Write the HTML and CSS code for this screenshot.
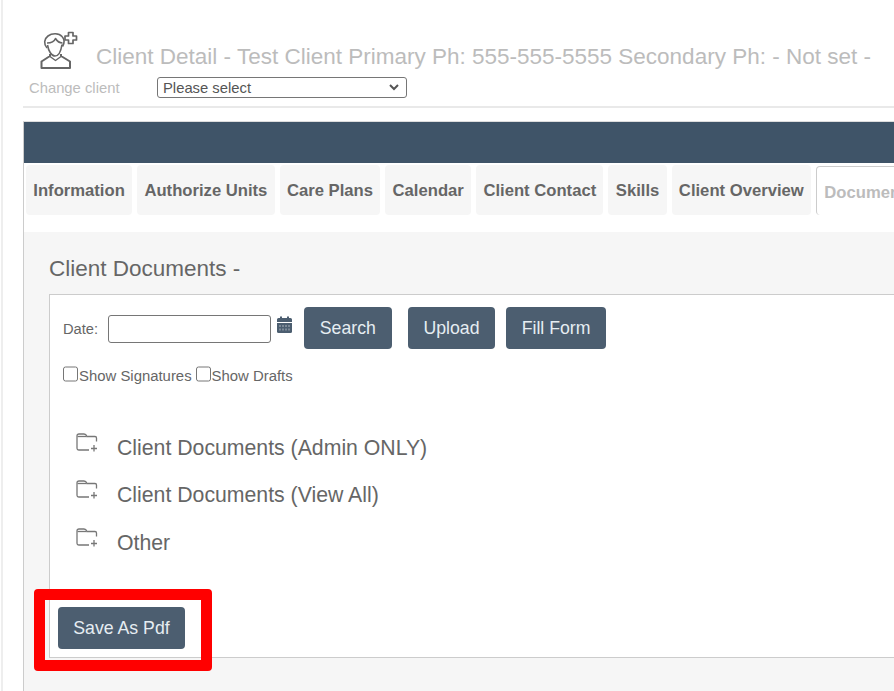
FILE: index.html
```html
<!DOCTYPE html>
<html lang="en">
<head>
<meta charset="utf-8">
<title>Client Detail</title>
<link rel="stylesheet" href="styles.css">
</head>
<body>
<div class="page">
  <header class="head">
    <div class="title-row">
      <svg class="user-icon" viewBox="0 0 38 38" width="38" height="38" fill="none" stroke="#666" stroke-width="1.600" stroke-linejoin="round">
        <path d="M7 17C3.500 13 4 8 8 5C12 2 19 2 22 5.500C24.500 8 24.500 12 22.500 15.500"/>
        <path d="M7 12C11 12 14.500 10 15.500 7.500C17 10 20 12 22.500 12"/>
        <path d="M7.500 14C8.500 20 11.500 25 15 25C18.500 25 21 20 22 13.500"/>
        <path d="M10 23v2L1.500 30.500V37H30V30.500L21 25v-2" stroke-width="2"/>
        <path d="M10 25.500l5.500 4 5.500-4" stroke-width="1.400"/>
        <path d="M28.500 1.500h4.500v3.500h3.500v4H33v3.500h-4.500V9H25V5h3.500z" stroke-width="1.700"/>
      </svg>
      <h1 class="title">Client Detail - Test Client Primary Ph: 555-555-5555 Secondary Ph: - Not set -</h1>
    </div>
    <div class="change-row">
      <label class="change-label" for="client">Change client</label>
      <select class="client-select" id="client"><option>Please select</option></select>
    </div>
  </header>
  <section class="panel">
    <div class="bar"></div>
    <nav class="tabs">
      <a class="tab">Information</a>
      <a class="tab">Authorize Units</a>
      <a class="tab">Care Plans</a>
      <a class="tab">Calendar</a>
      <a class="tab">Client Contact</a>
      <a class="tab">Skills</a>
      <a class="tab">Client Overview</a>
      <a class="tab active">Documents</a>
    </nav>
    <div class="content">
      <h2 class="section-title">Client Documents -</h2>
      <div class="box">
        <div class="toolbar">
          <label class="date-label" for="date">Date:</label>
          <input class="date-input" id="date" type="text">
          <svg class="cal-icon" viewBox="0 0 15 17" width="15" height="17">
            <path fill="#4c5e70" d="M1.500 2H3V0.500h2V2h5V0.500h2V2h1.500A1.500 1.500 0 0 1 15 3.500V6H0V3.500A1.500 1.500 0 0 1 1.500 2z"/>
            <path fill="#4c5e70" d="M0 7h15v8.500a1.500 1.500 0 0 1-1.500 1.500h-12A1.500 1.500 0 0 1 0 15.500z"/>
            <path fill="#7d8a97" d="M2 9h2v2H2zM5 9h2v2H5zM8 9h2v2H8zM11 9h2v2h-2zM2 12.500h2v2H2zM5 12.500h2v2H5zM8 12.500h2v2H8zM11 12.500h2v2h-2z"/>
          </svg>
          <button class="btn btn-search">Search</button>
          <button class="btn btn-upload">Upload</button>
          <button class="btn btn-fill">Fill Form</button>
        </div>
        <div class="checks">
          <label class="check"><input type="checkbox">Show Signatures</label>
          <label class="check"><input type="checkbox">Show Drafts</label>
        </div>
        <ul class="tree">
          <li class="tree-row">
            <svg class="folder" viewBox="0 0 22 19" width="22" height="19" fill="none" stroke="#777" stroke-width="1.300"><path d="M13 17H3Q1 17 1 15V3Q1 1 3 1H8Q10 1 11 3.500H19Q20.500 3.500 20.500 5V8.500"/><path d="M1.500 3.500h9"/><path d="M18 12v6.500M15 15.500h6"/></svg>
            <span>Client Documents (Admin ONLY)</span>
          </li>
          <li class="tree-row">
            <svg class="folder" viewBox="0 0 22 19" width="22" height="19" fill="none" stroke="#777" stroke-width="1.300"><path d="M13 17H3Q1 17 1 15V3Q1 1 3 1H8Q10 1 11 3.500H19Q20.500 3.500 20.500 5V8.500"/><path d="M1.500 3.500h9"/><path d="M18 12v6.500M15 15.500h6"/></svg>
            <span>Client Documents (View All)</span>
          </li>
          <li class="tree-row">
            <svg class="folder" viewBox="0 0 22 19" width="22" height="19" fill="none" stroke="#777" stroke-width="1.300"><path d="M13 17H3Q1 17 1 15V3Q1 1 3 1H8Q10 1 11 3.500H19Q20.500 3.500 20.500 5V8.500"/><path d="M1.500 3.500h9"/><path d="M18 12v6.500M15 15.500h6"/></svg>
            <span>Other</span>
          </li>
        </ul>
        <button class="btn btn-save">Save As Pdf</button>
      </div>
    </div>
  </section>
</div>
<div class="annotation"></div>
</body>
</html>
```
FILE: styles.css
```css
* { box-sizing: border-box; }
html, body { margin: 0; padding: 0; }
body {
  width: 894px;
  height: 691px;
  overflow: hidden;
  position: relative;
  background: #fff;
  font-family: "Liberation Sans", Arial, sans-serif;
  color: #666;
}
.page {
  height: 691px;
  margin-left: 1px;
  border-left: 2px solid #eee;
  padding-top: 31px;
  overflow: hidden;
}
.head {
  margin-left: 20px;
  height: 77px;
  border-bottom: 2px solid #e9e9e9;
}
.title-row {
  display: flex;
  align-items: flex-end;
  height: 38px;
  padding-left: 17px;
}
.user-icon { flex: none; }
.title {
  margin: 0 0 -1px 18px;
  font-size: 22.500px;
  font-weight: 400;
  line-height: 26px;
  color: #bcbcbc;
  white-space: nowrap;
}
.change-row {
  display: flex;
  align-items: center;
  margin-top: 8px;
  padding-left: 6px;
}
.change-label {
  width: 128px;
  font-size: 14.800px;
  color: #bcbcbc;
}
.client-select {
  appearance: none;
  width: 250px;
  height: 21px;
  padding: 0 0 0 5px;
  border: 1px solid #767676;
  border-radius: 3px;
  background: #fff url("data:image/svg+xml,%3Csvg xmlns='http://www.w3.org/2000/svg' width='10' height='7'%3E%3Cpath d='M1 1l4 4 4-4' fill='none' stroke='%23555' stroke-width='2'/%3E%3C/svg%3E") no-repeat right 7px center;
  font: 14.800px "Liberation Sans", Arial, sans-serif;
  color: #555;
}
.panel {
  margin: 13px 0 0 20px;
  border-left: 1px solid #ccc;
  border-top: 1px solid #ddd;
  height: 600px;
}
.bar { height: 41px; background: #3f5468; }
.tabs {
  display: flex;
  gap: 5px;
  height: 69px;
  padding: 2px 0 0 2px;
  background: #fff;
  white-space: nowrap;
}
.tab {
  flex: none;
  height: 50px;
  padding: 0 7.300px;
  border-radius: 4px;
  background: #f6f6f6;
  font-size: 16.650px;
  font-weight: 700;
  line-height: 52px;
  color: #666;
}
.tab.active {
  margin-top: 1px;
  height: 49px;
  border: 1px solid #ccc;
  border-bottom: 0;
  background: #fff;
  color: #bcbcbc;
}
.content {
  height: 460px;
  padding: 24px 0 0 25px;
  background: #f6f6f6;
}
.section-title {
  margin: 0 0 12px;
  height: 26px;
  font-size: 22.500px;
  font-weight: 400;
  line-height: 26px;
  color: #666;
}
.box {
  width: 860px;
  height: 364px;
  padding: 12px 0 0 13px;
  background: #fff;
  border: 1px solid #ccc;
  border-right: 0;
}
.toolbar {
  display: flex;
  align-items: center;
  height: 42px;
}
.date-label { width: 45px; font-size: 14.700px; color: #666; padding-top: 1px; }
.date-input {
  width: 163px;
  height: 28px;
  margin-top: 1px;
  border: 1px solid #767676;
  border-radius: 3px;
  background: #fff;
}
.cal-icon { flex: none; margin: 0 12px 8px 6px; }
.btn {
  height: 42px;
  padding: 0 15.800px;
  border: 0;
  border-radius: 4px;
  background: #4c5e70;
  font: 17.700px "Liberation Sans", Arial, sans-serif;
  color: #e6edf2;
}
.btn-search { margin-right: 16px; }
.btn-upload { margin-right: 11px; }
.btn-fill { padding: 0 15.400px; }
.checks {
  display: flex;
  gap: 4px;
  margin-top: 13px;
  height: 23px;
}
.check {
  display: flex;
  align-items: flex-end;
  font-size: 14.900px;
  line-height: 18px;
  color: #666;
}
.check input {
  margin: 0 1px 3px 0;
  width: 15px;
  height: 16px;
}
.tree {
  list-style: none;
  margin: 48.750px 0 0;
  padding: 0 0 0 13px;
}
.tree-row {
  display: flex;
  align-items: flex-start;
  height: 47.500px;
  font-size: 21.250px;
  line-height: 28px;
  color: #666;
}
.folder { flex: none; margin: -1px 19px 0 0; }
.btn-save {
  display: block;
  width: 127px;
  margin: 30.250px 0 0 -5px;
  padding: 1px 0 0;
}
.annotation {
  position: absolute;
  left: 34px;
  top: 589px;
  width: 178px;
  height: 82px;
  border: 11px solid #f00;
  border-radius: 4px;
}
```
